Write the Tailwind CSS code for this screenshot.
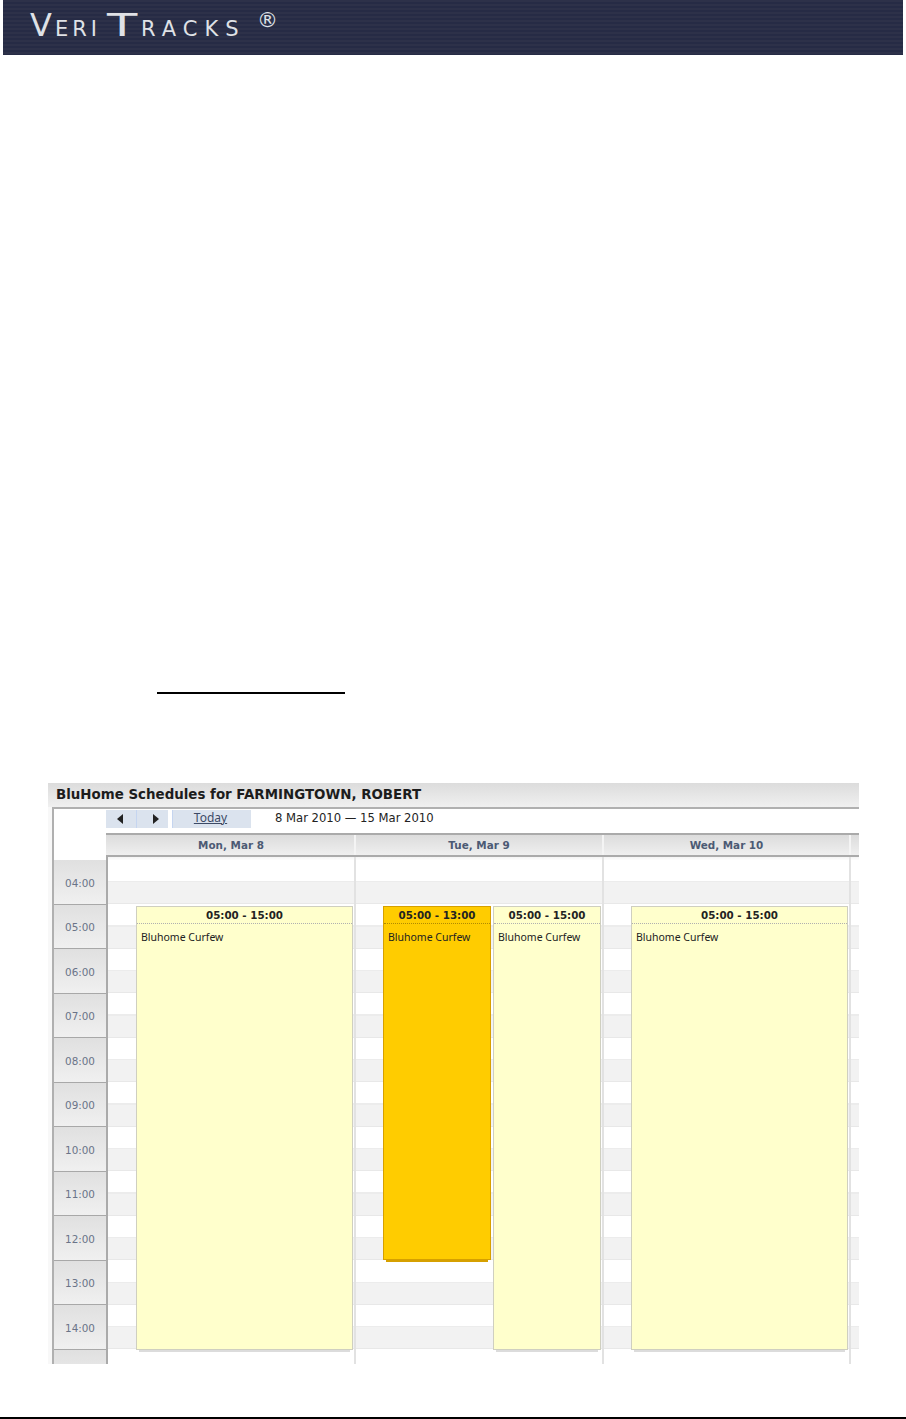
<!DOCTYPE html>
<html>
<head>
<meta charset="utf-8">
<title>VeriTracks</title>
<script src="https://cdn.jsdelivr.net/npm/@tailwindcss/browser@4"></script>
</head>
<body class="bg-white font-['DejaVu_Sans',sans-serif]">
  <!-- page banner -->
  <header class="mx-[3px] h-[55px] w-[900px] pl-[27px] pt-[7px] text-[#dfe1e6] bg-[#292e48] bg-[repeating-linear-gradient(180deg,#2d3149_0px,#2d3149_2px,#262b45_2px,#262b45_4px)]">
    <div class="flex items-baseline whitespace-nowrap leading-[36px]">
      <span class="w-[25px] text-[32px]">V</span>
      <span class="w-[52px] text-[21px] tracking-[4px]">ERI</span>
      <span class="w-[34px] origin-left scale-x-[1.55] text-[32px]">T</span>
      <span class="w-[116px] text-[21px] tracking-[7px]">RACKS</span>
      <span class="relative -top-[9px] text-[21px]">®</span>
    </div>
  </header>

  <div class="ml-[157px] mt-[637px] h-[2px] w-[188px] bg-black"></div>

  <!-- calendar widget -->
  <section class="ml-[48px] mt-[89px] h-[581px] w-[811px] overflow-hidden bg-[#f8f8f8]">
    <h2 class="h-[24px] bg-gradient-to-b from-[#dcdcdc] to-[#f0f0f0] pl-[8px] text-[13.4px] leading-[23px] font-bold text-[#1c1c1c]">BluHome Schedules for FARMINGTOWN, ROBERT</h2>

    <div class="ml-[4px] h-[557px] border-t-2 border-l-2 border-[#b0b0b0] bg-white">
      <!-- toolbar -->
      <div class="flex h-[24px] items-start pt-[1px] pl-[52px]">
        <button class="flex h-[18px] w-[31px] items-center justify-center border-r border-[#c5d5f0] bg-[#dbe3ee] pr-[2px]">
          <svg width="7" height="10" viewBox="0 0 7 10"><path d="M6 0v10L0 5z" fill="#222"/></svg>
        </button>
        <button class="flex h-[18px] w-[31px] items-center justify-center bg-[#dbe3ee] pl-[5px]">
          <svg width="7" height="10" viewBox="0 0 7 10"><path d="M1 0v10L7 5z" fill="#222"/></svg>
        </button>
        <a class="ml-[4px] h-[18px] w-[79px] border-l border-[#c5d5f0] bg-[#dbe3ee] pr-[3px] text-center font-['Noto_Sans',sans-serif] text-[12px] leading-[16px] text-[#3c4a66] underline">Today</a>
        <span class="ml-[24px] text-[11.6px] leading-[17px] text-[#222]">8 Mar 2010 — 15 Mar 2010</span>
      </div>

      <!-- day headers -->
      <div class="ml-[52px] flex h-[24px] border-y-2 border-[#aaa] text-[10.4px] leading-[21px] font-bold text-[#4c5a74]">
        <div class="w-[250px] border-r-2 border-[#f4f4f4] bg-gradient-to-b from-[#dcdcdc] to-[#efefef] pl-[2px] text-center">Mon, Mar 8</div>
        <div class="w-[248px] border-r-2 border-[#f4f4f4] bg-gradient-to-b from-[#dcdcdc] to-[#efefef] text-center">Tue, Mar 9</div>
        <div class="w-[247px] border-r-2 border-[#f4f4f4] bg-gradient-to-b from-[#dcdcdc] to-[#efefef] text-center">Wed, Mar 10</div>
        <div class="flex-1 bg-gradient-to-b from-[#dcdcdc] to-[#efefef]"></div>
      </div>

      <div class="flex">
        <!-- hour gutter -->
        <div class="h-[508px] w-[54px] shrink-0 overflow-hidden border-r-2 border-[#aaa] pt-[3px] text-center text-[10.4px] text-[#6a7488]">
          <div class="flex h-[44.5px] items-center justify-center border-b border-[#a8a8a8] bg-gradient-to-b from-[#e0e0e0] to-[#f0f0f0] pt-[4px]">04:00</div>
          <div class="flex h-[44.5px] items-center justify-center border-b border-[#a8a8a8] bg-gradient-to-b from-[#e0e0e0] to-[#f0f0f0] pt-[4px]">05:00</div>
          <div class="flex h-[44.5px] items-center justify-center border-b border-[#a8a8a8] bg-gradient-to-b from-[#e0e0e0] to-[#f0f0f0] pt-[4px]">06:00</div>
          <div class="flex h-[44.5px] items-center justify-center border-b border-[#a8a8a8] bg-gradient-to-b from-[#e0e0e0] to-[#f0f0f0] pt-[4px]">07:00</div>
          <div class="flex h-[44.5px] items-center justify-center border-b border-[#a8a8a8] bg-gradient-to-b from-[#e0e0e0] to-[#f0f0f0] pt-[4px]">08:00</div>
          <div class="flex h-[44.5px] items-center justify-center border-b border-[#a8a8a8] bg-gradient-to-b from-[#e0e0e0] to-[#f0f0f0] pt-[4px]">09:00</div>
          <div class="flex h-[44.5px] items-center justify-center border-b border-[#a8a8a8] bg-gradient-to-b from-[#e0e0e0] to-[#f0f0f0] pt-[4px]">10:00</div>
          <div class="flex h-[44.5px] items-center justify-center border-b border-[#a8a8a8] bg-gradient-to-b from-[#e0e0e0] to-[#f0f0f0] pt-[4px]">11:00</div>
          <div class="flex h-[44.5px] items-center justify-center border-b border-[#a8a8a8] bg-gradient-to-b from-[#e0e0e0] to-[#f0f0f0] pt-[4px]">12:00</div>
          <div class="flex h-[44.5px] items-center justify-center border-b border-[#a8a8a8] bg-gradient-to-b from-[#e0e0e0] to-[#f0f0f0] pt-[4px]">13:00</div>
          <div class="flex h-[44.5px] items-center justify-center border-b border-[#a8a8a8] bg-gradient-to-b from-[#e0e0e0] to-[#f0f0f0] pt-[4px]">14:00</div>
          <div class="h-[44.5px] bg-gradient-to-b from-[#e0e0e0] to-[#f0f0f0]"></div>
        </div>

        <!-- day columns: half hour bands, 44.5px per hour -->
        <div class="relative h-[508px] flex-1 overflow-hidden pt-[3px] bg-[linear-gradient(180deg,#f4f4f4,#fff)] bg-[length:100%_4px] bg-no-repeat">
          <div class="h-[489.5px] bg-[repeating-linear-gradient(180deg,#ffffff_0px,#ffffff_21px,#ececec_21px,#ececec_22.25px,#f2f2f2_22.25px,#f2f2f2_43.25px,#e8e8e8_43.25px,#e8e8e8_44.5px)]"></div>

          <div class="absolute inset-0 flex">
            <!-- Mon -->
            <div class="relative w-[248px] border-r-2 border-[#e2e2e2]">
              <div class="absolute top-[49px] left-[28px] h-[444px] w-[217px] border border-[#cfcfc0] bg-[#ffffcc] text-[#222]">
                <div class="h-[17px] border-b border-dotted border-[#b0b0b0] text-center text-[10.3px] leading-[17px] font-bold">05:00 - 15:00</div>
                <div class="pt-[5px] pl-[4px] font-['Noto_Sans',sans-serif] text-[10.5px] leading-[16px]">Bluhome Curfew</div>
                <div class="absolute -bottom-[3px] left-[2px] right-[2px] h-[2px] bg-[#dcdcdc]"></div>
              </div>
            </div>
            <!-- Tue -->
            <div class="relative w-[248px] border-r-2 border-[#e2e2e2]">
              <div class="absolute top-[49px] left-[27px] h-[354px] w-[108px] border border-[#d6a000] bg-[#ffcc00] text-[#222]">
                <div class="h-[17px] border-b border-dotted border-[#b08a00] text-center text-[10.3px] leading-[17px] font-bold">05:00 - 13:00</div>
                <div class="pt-[5px] pl-[4px] font-['Noto_Sans',sans-serif] text-[10.5px] leading-[16px]">Bluhome Curfew</div>
                <div class="absolute -bottom-[3px] left-[2px] right-[2px] h-[2px] bg-[#d6a000]"></div>
              </div>
              <div class="absolute top-[49px] left-[137px] h-[444px] w-[108px] border border-[#cfcfc0] bg-[#ffffcc] text-[#222]">
                <div class="h-[17px] border-b border-dotted border-[#b0b0b0] text-center text-[10.3px] leading-[17px] font-bold">05:00 - 15:00</div>
                <div class="pt-[5px] pl-[4px] font-['Noto_Sans',sans-serif] text-[10.5px] leading-[16px]">Bluhome Curfew</div>
                <div class="absolute -bottom-[3px] left-[2px] right-[2px] h-[2px] bg-[#dcdcdc]"></div>
              </div>
            </div>
            <!-- Wed -->
            <div class="relative w-[247px] border-r-2 border-[#e2e2e2]">
              <div class="absolute top-[49px] left-[27px] h-[444px] w-[217px] border border-[#cfcfc0] bg-[#ffffcc] text-[#222]">
                <div class="h-[17px] border-b border-dotted border-[#b0b0b0] text-center text-[10.3px] leading-[17px] font-bold">05:00 - 15:00</div>
                <div class="pt-[5px] pl-[4px] font-['Noto_Sans',sans-serif] text-[10.5px] leading-[16px]">Bluhome Curfew</div>
                <div class="absolute -bottom-[3px] left-[2px] right-[2px] h-[2px] bg-[#dcdcdc]"></div>
              </div>
            </div>
          </div>
        </div>
      </div>
    </div>
  </section>

  <div class="mt-[53px] h-[2px] w-full bg-black"></div>
</body>
</html>
